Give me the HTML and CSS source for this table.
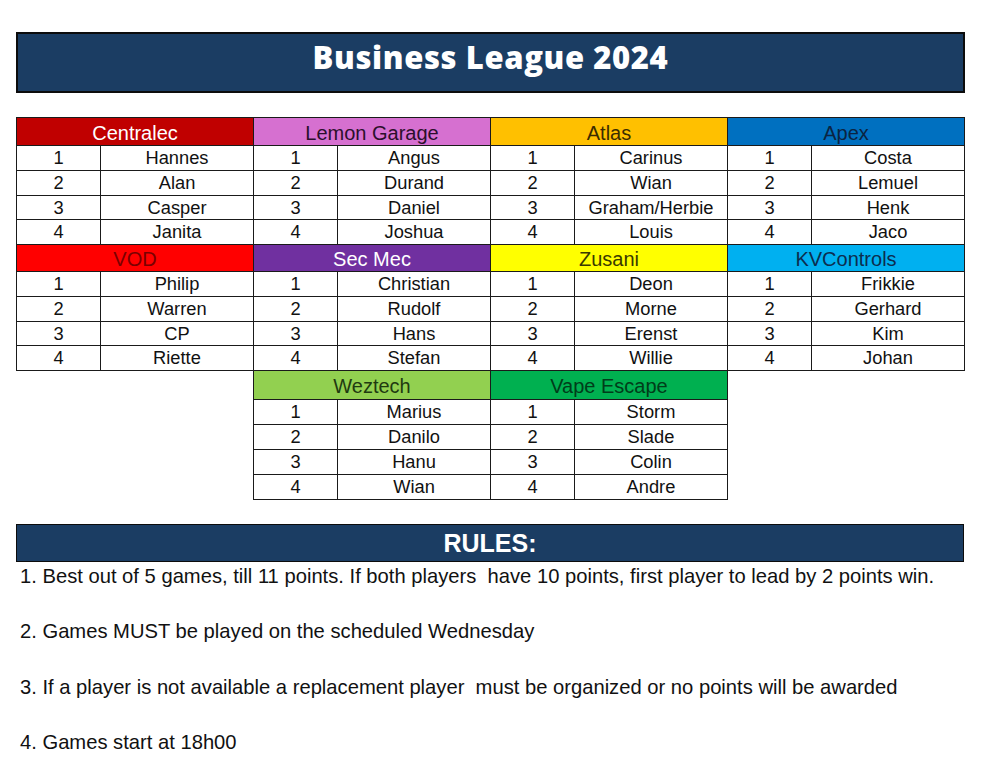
FILE: index.html
```html
<!DOCTYPE html>
<html>
<head>
<meta charset="utf-8">
<title>Business League 2024</title>
<link rel="stylesheet" href="styles.css">
</head>
<body>
<div class="page">
  <header class="title-bar"><h1>Business League 2024</h1></header>

  <div class="league">
    <div class="team-head centralec">Centralec</div>
    <div class="team-head lemon">Lemon Garage</div>
    <div class="team-head atlas">Atlas</div>
    <div class="team-head apex">Apex</div>

    <div class="c">1</div><div class="c">Hannes</div><div class="c">1</div><div class="c">Angus</div><div class="c">1</div><div class="c">Carinus</div><div class="c">1</div><div class="c">Costa</div>
    <div class="c">2</div><div class="c">Alan</div><div class="c">2</div><div class="c">Durand</div><div class="c">2</div><div class="c">Wian</div><div class="c">2</div><div class="c">Lemuel</div>
    <div class="c">3</div><div class="c">Casper</div><div class="c">3</div><div class="c">Daniel</div><div class="c">3</div><div class="c">Graham/Herbie</div><div class="c">3</div><div class="c">Henk</div>
    <div class="c">4</div><div class="c">Janita</div><div class="c">4</div><div class="c">Joshua</div><div class="c">4</div><div class="c">Louis</div><div class="c">4</div><div class="c">Jaco</div>

    <div class="team-head vod">VOD</div>
    <div class="team-head secmec">Sec Mec</div>
    <div class="team-head zusani">Zusani</div>
    <div class="team-head kv">KVControls</div>

    <div class="c">1</div><div class="c">Philip</div><div class="c">1</div><div class="c">Christian</div><div class="c">1</div><div class="c">Deon</div><div class="c">1</div><div class="c">Frikkie</div>
    <div class="c">2</div><div class="c">Warren</div><div class="c">2</div><div class="c">Rudolf</div><div class="c">2</div><div class="c">Morne</div><div class="c">2</div><div class="c">Gerhard</div>
    <div class="c">3</div><div class="c">CP</div><div class="c">3</div><div class="c">Hans</div><div class="c">3</div><div class="c">Erenst</div><div class="c">3</div><div class="c">Kim</div>
    <div class="c">4</div><div class="c">Riette</div><div class="c">4</div><div class="c">Stefan</div><div class="c">4</div><div class="c">Willie</div><div class="c">4</div><div class="c">Johan</div>
  </div>

  <div class="league league-small">
    <div class="team-head weztech">Weztech</div>
    <div class="team-head vape">Vape Escape</div>

    <div class="c">1</div><div class="c">Marius</div><div class="c">1</div><div class="c">Storm</div>
    <div class="c">2</div><div class="c">Danilo</div><div class="c">2</div><div class="c">Slade</div>
    <div class="c">3</div><div class="c">Hanu</div><div class="c">3</div><div class="c">Colin</div>
    <div class="c">4</div><div class="c">Wian</div><div class="c">4</div><div class="c">Andre</div>
  </div>

  <div class="rules-bar">RULES:</div>
  <ol class="rules">
    <li>1. Best out of 5 games, till 11 points. If both players  have 10 points, first player to lead by 2 points win.</li>
    <li>2. Games MUST be played on the scheduled Wednesday</li>
    <li>3. If a player is not available a replacement player  must be organized or no points will be awarded</li>
    <li>4. Games start at 18h00</li>
  </ol>
</div>
</body>
</html>
```

FILE: styles.css
```css
* { box-sizing: border-box; }

html, body {
  margin: 0;
  padding: 0;
  background: #ffffff;
}

body {
  font-family: "Liberation Sans", Arial, sans-serif;
  color: #111111;
}

.page {
  width: 949px;
  margin-left: 16px;
  padding-top: 32px;
  display: flex;
  flex-direction: column;
}

.title-bar {
  height: 61px;
  background: #1b3d63;
  border: 2px solid #0c0c0c;
  display: flex;
  align-items: center;
  justify-content: center;
}

.title-bar h1 {
  margin: 0;
  font-family: "Open Sans", Lato, sans-serif;
  font-weight: 800;
  font-size: 31px;
  line-height: 1;
  color: #ffffff;
  letter-spacing: 0.6px;
  padding-bottom: 10px;
}

.league {
  margin-top: 24px;
  width: 949px;
  display: grid;
  grid-template-columns: repeat(4, 83px 152px);
  grid-template-rows: 27px repeat(4, 23.75px) 26px repeat(4, 23.75px);
  gap: 1px;
  padding: 1px;
  background: #1a1a1a;
}

.league-small {
  margin-top: -1px;
  width: 475px;
  align-self: center;
  grid-template-columns: repeat(2, 83px 152px);
  grid-template-rows: 28px repeat(4, 24px);
}

.c {
  background: #ffffff;
  font-size: 18.3px;
  line-height: 1;
  display: flex;
  align-items: center;
  justify-content: center;
  padding-top: 1px;
}

.team-head {
  grid-column: span 2;
  font-size: 20px;
  line-height: 1;
  display: flex;
  align-items: center;
  justify-content: center;
  padding-top: 2px;
}

.centralec { background: #c00000; color: #ffffff; }
.lemon { background: #d670d0; color: #2b0f2b; }
.atlas { background: #ffc000; color: #3b2c00; }
.apex { background: #0070c0; color: #0b2442; }
.vod { background: #ff0000; color: #7a0000; }
.secmec { background: #7030a0; color: #ffffff; }
.zusani { background: #ffff00; color: #3a3a00; }
.kv { background: #00b0f0; color: #0c2d4f; }
.weztech { background: #92d050; color: #1f3a10; }
.vape { background: #00b050; color: #003d1a; }

.rules-bar {
  margin-top: 24px;
  width: 948px;
  height: 38px;
  background: #1b3d63;
  border: 1px solid #0c0c0c;
  color: #ffffff;
  font-weight: bold;
  font-size: 25px;
  display: flex;
  align-items: center;
  justify-content: center;
  padding-top: 1px;
}

.rules {
  list-style: none;
  margin: 3px 0 0 0;
  padding: 0 0 0 4px;
  display: flex;
  flex-direction: column;
  gap: 32.3px;
}

.rules li {
  font-size: 20.2px;
  line-height: 23px;
  white-space: pre;
  color: #111111;
}
```
